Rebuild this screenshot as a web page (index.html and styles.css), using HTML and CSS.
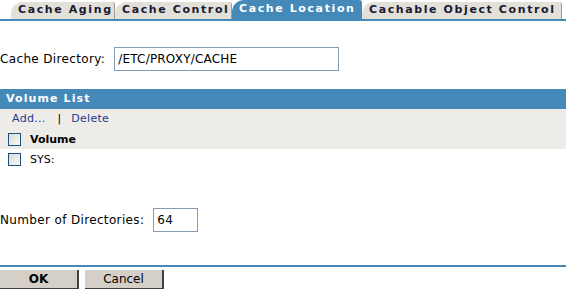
FILE: index.html
```html
<!DOCTYPE html>
<html lang="en">
  <head>
    <meta charset="UTF-8" />
    <title>Cache Location</title>
    <link rel="stylesheet" href="styles.css">
  </head>
  <body>
    <!-- Pestañas -->
    <div class="tabs">
      <div class="tab">Cache Aging</div>
      <div class="tab">Cache Control</div>
      <div class="tab active">Cache Location</div>
      <div class="tab">Cachable Object Control</div>
    </div>

    <div class="field cache-dir">
      <label for="cacheDir">Cache Directory:</label>
      <input type="text" id="cacheDir" class="dir-input" value="/ETC/PROXY/CACHE" />
    </div>

    <!-- Lista de volumenes -->
    <div class="panel">
      <div class="panel-title">Volume List</div>
      <div class="toolbar">
        <a href="#">Add...</a>
        <span class="sep">|</span>
        <a href="#">Delete</a>
      </div>
      <div class="row head">
        <span class="check"></span>
        <span>Volume</span>
      </div>
      <div class="row">
        <span class="check"></span>
        <span>SYS:</span>
      </div>
    </div>

    <div class="field num-dirs">
      <label for="numDirs">Number of Directories:</label>
      <input type="text" id="numDirs" class="num-input" value="64" />
    </div>

    <div class="footer">
      <button class="btn ok">OK</button>
      <button class="btn cancel">Cancel</button>
    </div>
  </body>
</html>
```

FILE: styles.css
```css
body {
  margin: 0;
  font-family: 'DejaVu Sans', Verdana, sans-serif;
  font-size: 12px;
  color: #000;
  background: #fff;
  width: 566px;
  height: 289px;
  overflow: hidden;
}

/* Pestañas */
.tabs {
  display: flex;
  align-items: flex-end;
  height: 19px;
  padding-left: 11px;
  border-bottom: 2px solid #4589b9;
}

.tab {
  position: relative;
  height: 17px;
  line-height: 16px;
  padding: 0 12px 0 7px;
  background: #e3e0d9;
  color: #1a1a33;
  font-weight: bold;
  font-size: 11px;
  letter-spacing: 1.6px;
  border-radius: 12px 3px 0 0;
  border-right: 1px solid #9c9a94;
  white-space: nowrap;
}

.tab.active {
  background: #4589b9;
  color: #fff;
  height: 19px;
  line-height: 18px;
  border-right-color: #4589b9;
}

.tab:first-child {
  width: 84px;
}

.tab:nth-child(2) {
  width: 97px;
}

.tab.active {
  width: 110px;
}

.tab:last-child {
  width: 180px;
}

.field {
  display: flex;
  align-items: center;
  font-size: 12px;
  letter-spacing: 0.35px;
}

.field label {
  margin-right: 9px;
}

.field input {
  font-family: 'DejaVu Sans', Verdana, sans-serif;
  font-size: 12px;
  letter-spacing: 0.2px;
  border: 1px solid #7f9db9;
  height: 24px;
  box-sizing: border-box;
  padding: 0 3px;
  color: #000;
}

.cache-dir {
  margin-top: 26px;
}

.dir-input {
  width: 225px;
}

.num-input {
  width: 45px;
}

/* Lista */
.panel {
  margin-top: 18px;
}

.panel-title {
  background: #4589b9;
  color: #fff;
  font-weight: bold;
  font-size: 11px;
  letter-spacing: 1.1px;
  height: 20px;
  line-height: 20px;
  padding-left: 6px;
}

.toolbar {
  background: #eeece8;
  height: 20px;
  line-height: 20px;
  padding-left: 12px;
  font-size: 11px;
  letter-spacing: 0.3px;
}

.toolbar a {
  color: #1f3a8f;
  text-decoration: none;
}

.sep {
  color: #000;
  margin: 0 6px 0 8px;
}

.row {
  display: flex;
  align-items: center;
  height: 20px;
  padding-left: 8px;
  font-size: 11px;
}

.row.head {
  background: #eeece8;
  font-weight: bold;
}

.check {
  width: 11px;
  height: 11px;
  border: 1px solid #1c5180;
  background: linear-gradient(135deg, #dcdcd6, #f8f8f6);
  margin-right: 9px;
}

.num-dirs {
  margin-top: 39px;
}

/* Botones */
.footer {
  margin-top: 33px;
  border-top: 2px solid #4589b9;
  padding-top: 3px;
  display: flex;
  gap: 6px;
}

.btn {
  width: 79px;
  height: 19px;
  background: #d4d0c8;
  border: none;
  border-right: 2px solid #404040;
  border-bottom: 1px solid #404040;
  font-family: 'DejaVu Sans', Verdana, sans-serif;
  font-size: 12px;
  color: #000;
  padding: 0;
}

.ok {
  font-weight: 600;
}
```
